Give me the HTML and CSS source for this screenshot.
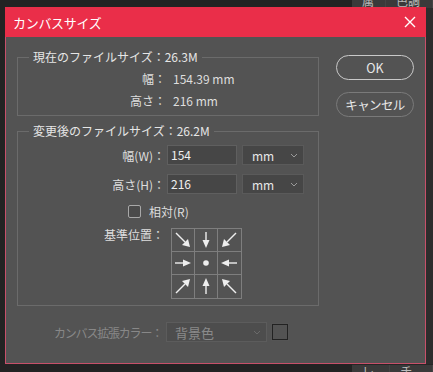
FILE: index.html
```html
<!DOCTYPE html>
<html>
<head>
  <title>カンバスサイズ</title>
  <meta name="viewport" content="width=device-width, initial-scale=1">
  <link rel="stylesheet" href="styles.css">
</head>
<body>
  <div class="backdrop">
    <div class="panel-tabs"><span class="tab">属性</span><span class="tab">色調補正</span></div>
    <div class="panel-tabs bottom"><span class="tab">レイヤー</span><span class="tab">チャンネル</span></div>
  </div>
  <div class="dialog">
    <div class="titlebar">
      <span class="title">カンバスサイズ</span>
      <svg class="close" width="12" height="12" viewBox="0 0 12 12"><path d="M1 1L11 11M11 1L1 11" stroke="#fff" stroke-width="1.4"/></svg>
    </div>
    <div class="dialog-body">
      <div class="main">
        <fieldset class="group">
          <legend>現在のファイルサイズ：26.3M</legend>
          <div class="info-row"><span class="label">幅：</span><span class="value">154.39 mm</span></div>
          <div class="info-row"><span class="label">高さ：</span><span class="value">216 mm</span></div>
        </fieldset>
        <fieldset class="group new-size">
          <legend>変更後のファイルサイズ：26.2M</legend>
          <div class="field-row">
            <span class="label">幅(W)：</span>
            <span class="input">154</span>
            <span class="select">mm<svg class="chev" width="8" height="5" viewBox="0 0 8 5"><path d="M1 1L4 4L7 1" stroke="#9a9a9a" fill="none"/></svg></span>
          </div>
          <div class="field-row">
            <span class="label">高さ(H)：</span>
            <span class="input">216</span>
            <span class="select">mm<svg class="chev" width="8" height="5" viewBox="0 0 8 5"><path d="M1 1L4 4L7 1" stroke="#9a9a9a" fill="none"/></svg></span>
          </div>
          <div class="check-row"><span class="checkbox"></span><span>相対(R)</span></div>
          <div class="anchor-row">
            <span class="label">基準位置：</span>
            <div class="anchor-grid">
              <span class="cell"><svg viewBox="0 0 22 22"><path d="M4 4L13 13" stroke="#eee" stroke-width="1.4"/><path d="M18 18L10 16L16 10Z" fill="#eee"/></svg></span>
              <span class="cell"><svg viewBox="0 0 22 22"><path d="M11 3V13" stroke="#eee" stroke-width="1.4"/><path d="M11 19L7.5 11H14.5Z" fill="#eee"/></svg></span>
              <span class="cell"><svg viewBox="0 0 22 22"><path d="M18 4L9 13" stroke="#eee" stroke-width="1.4"/><path d="M4 18L6 10L12 16Z" fill="#eee"/></svg></span>
              <span class="cell"><svg viewBox="0 0 22 22"><path d="M3 11H13" stroke="#eee" stroke-width="1.4"/><path d="M19 11L11 7.5V14.5Z" fill="#eee"/></svg></span>
              <span class="cell"><svg viewBox="0 0 22 22"><circle cx="11" cy="11" r="2.8" fill="#eee"/></svg></span>
              <span class="cell"><svg viewBox="0 0 22 22"><path d="M19 11H9" stroke="#eee" stroke-width="1.4"/><path d="M3 11L11 7.5V14.5Z" fill="#eee"/></svg></span>
              <span class="cell"><svg viewBox="0 0 22 22"><path d="M4 18L13 9" stroke="#eee" stroke-width="1.4"/><path d="M18 4L16 12L10 6Z" fill="#eee"/></svg></span>
              <span class="cell"><svg viewBox="0 0 22 22"><path d="M11 19V9" stroke="#eee" stroke-width="1.4"/><path d="M11 3L7.5 11H14.5Z" fill="#eee"/></svg></span>
              <span class="cell"><svg viewBox="0 0 22 22"><path d="M18 18L9 9" stroke="#eee" stroke-width="1.4"/><path d="M4 4L12 6L6 12Z" fill="#eee"/></svg></span>
            </div>
          </div>
        </fieldset>
        <div class="ext-row">
          <span class="label">カンバス拡張カラー：</span>
          <span class="select wide">背景色<svg class="chev" width="8" height="5" viewBox="0 0 8 5"><path d="M1 1L4 4L7 1" stroke="#6a6a6a" fill="none"/></svg></span>
          <span class="swatch"></span>
        </div>
      </div>
      <div class="buttons">
        <span class="btn primary">OK</span>
        <span class="btn">キャンセル</span>
      </div>
    </div>
  </div>
</body>
</html>
```

FILE: styles.css
```css
html, body { margin:0; width:433px; height:372px; overflow:hidden; }
body { background:#232323; font-family:"Noto Sans CJK JP","Liberation Sans",sans-serif; font-size:12px;
       color:#dedede; padding:7px 0 0 5px; box-sizing:border-box; position:relative; }

/* app panels behind the dialog */
.backdrop { position:absolute; left:352px; top:0; right:0; bottom:0; background:#2d2d2d;
            display:flex; flex-direction:column; justify-content:space-between; }
.panel-tabs { display:flex; height:8px; overflow:hidden; background:#262626; }
.tab { color:#bbb; font-size:12px; line-height:12px; padding:0 10px; margin-top:-5px;
       border-right:1px solid #444; background:#3a3a3a; }
.panel-tabs.bottom .tab { margin-top:1px; }

.dialog { position:relative; width:421px; height:357px; background:#535353;
          border:1px solid #c8506a; box-sizing:border-box; display:flex; flex-direction:column; }
.titlebar { height:30px; margin:-1px -1px 0; background:#ea2e49; display:flex; align-items:center;
            justify-content:space-between; padding:0 10px 0 8px; }
.title { color:#fff; font-size:13px; letter-spacing:-0.3px; }
.close { display:block; }

.dialog-body { display:flex; padding:12px 0 0 11px; }
.main { width:302px; }
.buttons { display:flex; flex-direction:column; gap:12px; margin:6px 0 0 17px; }
.btn { width:78px; height:25px; box-sizing:border-box; border:1.5px solid #c9c9c9; border-radius:13px;
       display:flex; align-items:center; justify-content:center; color:#e8e8e8; font-size:12.5px; }
.btn:not(.primary) { border-color:#7a7a7a; letter-spacing:-0.6px; }

.group { margin:0; padding:0; border:1px solid #6b6b6b; min-width:0; }
.group legend { margin-left:11px; padding:0 4px; line-height:16px; color:#e6e6e6; }
.group > .info-row:first-of-type { margin-top:2px; }
.info-row { display:flex; height:22px; align-items:center; }
.label { width:148px; text-align:right; flex-shrink:0; white-space:nowrap; }
.value { margin-left:7px; }
.group:first-of-type { padding-bottom:4px; }

.new-size { margin-top:7px; padding:6px 0 6px; }
.field-row { display:flex; align-items:center; height:20px; margin-bottom:9px; }
.field-row .label { width:147px; }
.input { margin-left:2px; width:70px; height:20px; box-sizing:border-box; background:#464646;
         border:1px solid #5f5f5f; padding-left:3px; line-height:18px; color:#f0f0f0; }
.select { margin-left:5px; width:62px; height:20px; box-sizing:border-box; background:#464646;
          border:1px solid #5a5a5a; padding:0 5px 0 9px; display:flex; align-items:center;
          justify-content:space-between; color:#e8e8e8; }
.check-row { display:flex; align-items:center; gap:8px; margin:1px 0 0 110px; height:16px; }
.checkbox { width:11px; height:11px; border:1px solid #a8a8a8; border-radius:2px; background:#4a4a4a; }
.anchor-row { display:flex; align-items:flex-start; margin-top:9px; }
.anchor-row .label { width:146px; line-height:14px; }
.anchor-grid { margin-left:7px; display:grid; grid-template-columns:repeat(3,23px); grid-template-rows:repeat(3,23px);
               border:1px solid #7e7e7e; width:max-content; }
.cell { border-right:1px solid #7e7e7e; border-bottom:1px solid #7e7e7e; display:flex; }
.cell:nth-child(3n) { border-right:0; }
.cell:nth-child(n+7) { border-bottom:0; }
.cell svg { width:22px; height:22px; }

.ext-row { display:flex; align-items:center; margin-top:16px; color:#888; }
.ext-row .label { width:145px; letter-spacing:-1.2px; }
.select.wide { width:101px; margin-left:4px; border-color:#5c5c5c; background:#4d4d4d; color:#8a8a8a; padding-left:8px; font-size:13px; }
.swatch { width:14px; height:14px; border:1px solid #222; margin-left:5px; background:#535353; outline:1px solid #555; }
```
